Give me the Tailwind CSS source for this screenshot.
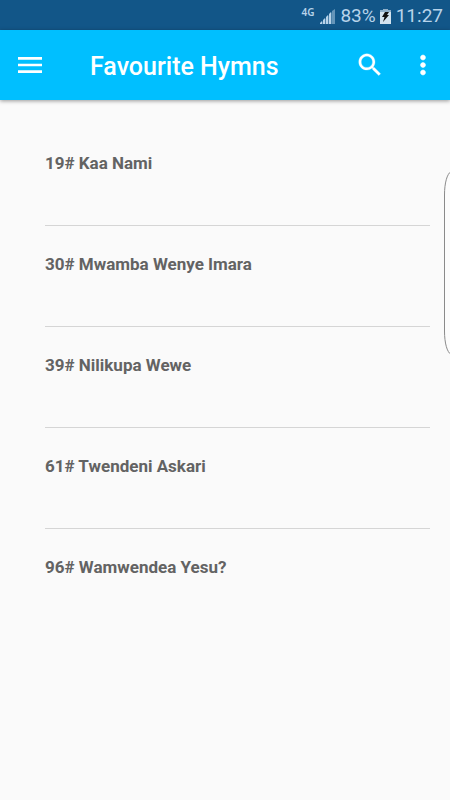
<!DOCTYPE html>
<html lang="en">
<head>
<meta charset="utf-8">
<meta name="viewport" content="width=device-width, initial-scale=1">
<title>Favourite Hymns</title>
<script src="https://cdn.jsdelivr.net/npm/@tailwindcss/browser@4"></script>
</head>
<body class="relative min-h-screen overflow-x-hidden bg-[#fafafa] font-[Roboto,sans-serif]">
<div class="flex h-[30px] items-center justify-end bg-[#125688] pt-[2px] pr-[7px] text-[19px] leading-6 text-[#b7d3ea]">
  <span class="mr-[6px] mb-2 font-['Noto_Sans',sans-serif] text-[10px] leading-3 font-semibold">4G</span>
  <svg class="mr-[5px] h-[15px] w-[15px]" viewBox="0 0 15 15" fill="currentColor" aria-label="Signal">
    <path d="M0 15L12 3V15z" opacity=".35"/>
    <path d="M0 15v-1l2-2v3zM3 15v-4l2-2v6zM6 15V8l2-2v9zM9 15V5l2-2v12z"/>
    <path d="M12 15V2l3-2v15z" opacity=".5"/>
  </svg>
  <span>83%</span>
  <svg class="mr-[5px] ml-1 h-[15px] w-[11px]" viewBox="0 0 11 15" aria-label="Battery charging">
    <path d="M3 0h5v1h3v14H0V1h3z" fill="#d3e3ef"/>
    <path d="M3 0h5v1h3v2H0V1h3z" fill="#8fb0ca"/>
    <path d="M5 3h4L7 6h2L3 13l1.500-5H2z" fill="#111"/>
  </svg>
  <span>11:27</span>
</div>
<header class="flex h-[70px] items-center bg-[#00bfff] pr-2 pl-[14px] text-white shadow-[0_1px_4px_rgba(0,0,0,0.4)]">
  <button type="button" aria-label="Open menu">
    <svg class="size-8" viewBox="0 0 24 24" fill="currentColor"><path d="M3 18h18v-2H3v2zm0-5h18v-2H3v2zm0-7v2h18V6H3z"/></svg>
  </button>
  <h1 class="ml-11 grow pt-[3px] text-[25px] leading-8 font-medium">Favourite Hymns</h1>
  <button type="button" aria-label="Search" class="mr-[23px]">
    <svg class="size-[30px]" viewBox="0 0 24 24" fill="currentColor" stroke="currentColor" stroke-width=".2"><path d="M15.500 14h-.79l-.28-.27C15.410 12.590 16 11.110 16 9.500 16 5.910 13.090 3 9.500 3S3 5.910 3 9.500 5.910 16 9.500 16c1.610 0 3.090-.59 4.230-1.570l.27.28v.79l5 4.990L20.490 19l-4.990-5zm-6 0C7.010 14 5 11.990 5 9.500S7.010 5 9.500 5 14 7.010 14 9.500 11.990 14 9.500 14z"/></svg>
  </button>
  <button type="button" aria-label="More options" class="mr-1">
    <svg class="size-[30px]" viewBox="0 0 24 24" fill="currentColor" stroke="currentColor" stroke-width=".4"><path d="M12 8c1.100 0 2-.9 2-2s-.9-2-2-2-2 .9-2 2 .9 2 2 2zm0 2c-1.100 0-2 .9-2 2s.9 2 2 2 2-.9 2-2-.9-2-2-2zm0 6c-1.100 0-2 .9-2 2s.9 2 2 2 2-.9 2-2-.9-2-2-2z"/></svg>
  </button>
</header>
<main class="pt-[25px] pr-5 pl-[45px]">
  <ul class="divide-y divide-[#d5d5d5] text-[17px] leading-6 font-bold text-[#636363]">
    <li class="pt-[26px] pb-[50px]">19# Kaa Nami</li>
    <li class="pt-[26px] pb-[50px]">30# Mwamba Wenye Imara</li>
    <li class="pt-[26px] pb-[50px]">39# Nilikupa Wewe</li>
    <li class="pt-[26px] pb-[50px]">61# Twendeni Askari</li>
    <li class="pt-[26px] pb-[50px]">96# Wamwendea Yesu?</li>
  </ul>
</main>
<div class="absolute top-[171px] right-0 h-[184px] w-[6px]" aria-hidden="true">
  <svg class="h-full w-full" viewBox="0 0 6 184" fill="#fcfcfc" stroke="#8a8a8a"><path d="M7 .5C3 3 .5 12 .5 24v136C.5 172 3 181 7 183.500"/></svg>
</div>
</body>
</html>
